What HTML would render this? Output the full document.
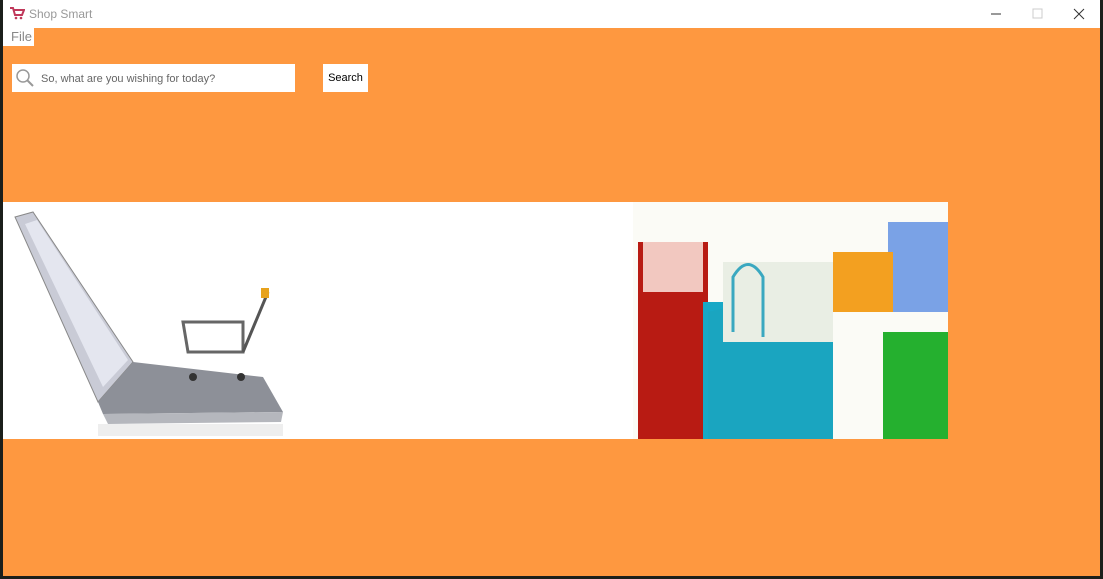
<!DOCTYPE html>
<html><head><style>
html,body{margin:0;padding:0;width:1103px;height:579px;overflow:hidden;background:#1b1f1b;font-family:"Liberation Sans","DejaVu Sans",sans-serif}
.win{position:absolute;left:3px;top:0;width:1097px;height:576px;background:#fe9840}
.title{position:absolute;left:0;top:0;width:1097px;height:28px;background:#fff}
.title span{position:absolute;left:26px;top:7px;font-size:12px;color:#999}
.menu{position:absolute;left:0;top:28px;width:31px;height:18px;background:#fff;font-size:13px;color:#888;padding-left:8px;box-sizing:border-box;line-height:17px}
.search{position:absolute;left:9px;top:64px;width:283px;height:28px;background:#fff}
.search span{position:absolute;left:29px;top:9px;font-size:11px;color:#666}
.btn{position:absolute;left:320px;top:64px;width:45px;height:28px;background:#fff;font-size:11px;color:#000;text-align:center;line-height:28px}
.img{position:absolute;left:0;top:202px;width:630px;height:237px;background:#fff}
.bags{position:absolute;left:630px;top:202px;width:315px;height:237px;background:#fbfbf6;overflow:hidden}
</style></head><body>
<div class="win">
<div class="title">
<svg style="position:absolute;left:7px;top:7px" width="15" height="13" viewBox="0 0 15 13"><path d="M0 1h3l2 7h7l2-5H4" fill="none" stroke="#c0385a" stroke-width="2"/><circle cx="6" cy="11" r="1.3" fill="#c0385a"/><circle cx="11" cy="11" r="1.3" fill="#c0385a"/></svg>
<span>Shop Smart</span>
<svg style="position:absolute;left:985px;top:8px" width="100" height="12"><line x1="3" y1="6" x2="13" y2="6" stroke="#333"/><rect x="45" y="1" width="9" height="9" fill="none" stroke="#ccc"/><path d="M86 1l10 10M96 1l-10 10" stroke="#333"/></svg>
</div>
<div class="menu">File</div>
<div class="search"><svg style="position:absolute;left:3px;top:4px" width="20" height="20"><circle cx="8" cy="8" r="6" fill="none" stroke="#999" stroke-width="1.5"/><line x1="12.5" y1="12.5" x2="18" y2="18" stroke="#999" stroke-width="2"/></svg><span>So, what are you wishing for today?</span></div>
<div class="btn">Search</div>
<div class="img">
<svg width="630" height="237">
<polygon points="12,15 30,10 130,160 95,200" fill="#c9cbd6" stroke="#888"/>
<polygon points="22,22 34,18 125,158 100,185" fill="#e4e6ef"/>
<polygon points="95,200 130,160 260,175 280,210 100,212" fill="#8d9098"/>
<polygon points="100,212 280,210 278,220 105,222" fill="#b5b7bd"/>
<rect x="95" y="222" width="185" height="12" fill="#eee"/>
<path d="M180 120h60v30h-55z" fill="none" stroke="#666" stroke-width="3"/>
<path d="M240 150l25-60" stroke="#555" stroke-width="3"/><rect x="258" y="86" width="8" height="10" fill="#e7a21c"/>
<circle cx="190" cy="175" r="4" fill="#333"/><circle cx="238" cy="175" r="4" fill="#333"/>
</svg></div>
<div class="bags"><svg width="315" height="237">
<rect x="5" y="40" width="70" height="200" fill="#b81b13"/>
<rect x="10" y="40" width="60" height="50" fill="#f2c8c0"/>
<rect x="70" y="100" width="90" height="140" fill="#18a8c6"/>
<path d="M75 110l85 -20 40 30v120H75z" fill="#1aa5c0"/>
<rect x="90" y="60" width="110" height="80" fill="#e9eee4"/>
<rect x="250" y="130" width="65" height="110" fill="#25b02f"/>
<rect x="255" y="20" width="60" height="90" fill="#7aa2e6"/>
<rect x="200" y="50" width="60" height="60" fill="#f3a020"/>
<path d="M100 130V75q15-25 30 0v60" fill="none" stroke="#3aa8c0" stroke-width="3"/>
</svg></div>
</div>
</body></html>
